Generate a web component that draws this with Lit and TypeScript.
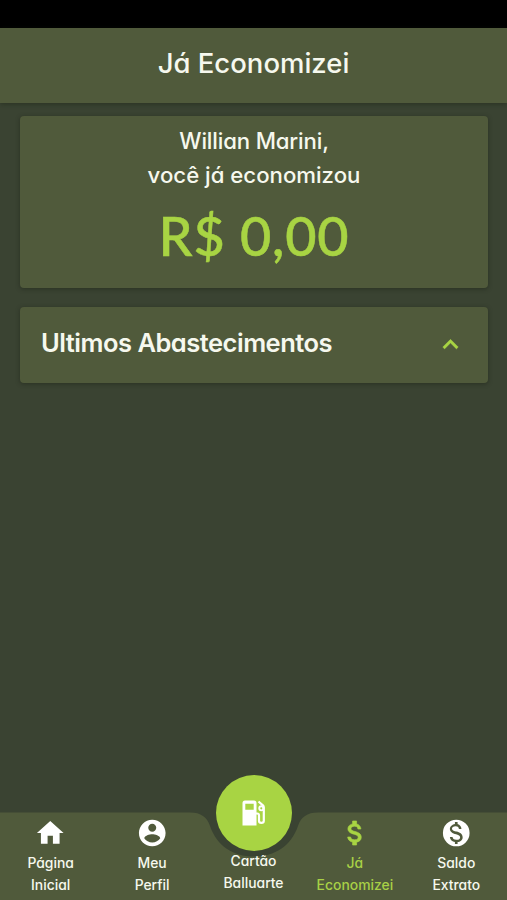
import { LitElement, html, css, svg } from "lit";
import { customElement } from "lit/decorators.js";
import { classMap } from "lit/directives/class-map.js";

const icons = {
  home: svg`<path d="M10 20v-6h4v6h5v-8h3L12 3 2 12h3v8z"/>`,
  person: svg`<path d="M12 2C6.48 2 2 6.48 2 12s4.48 10 10 10 10-4.48 10-10S17.52 2 12 2zm0 3c1.66 0 3 1.34 3 3s-1.34 3-3 3-3-1.34-3-3 1.34-3 3-3zm0 14.2c-2.5 0-4.71-1.28-6-3.22.03-1.99 4-3.08 6-3.08 1.99 0 5.97 1.09 6 3.08-1.29 1.94-3.5 3.22-6 3.22z"/>`,
  money: svg`<path stroke="currentColor" stroke-width=".5" d="M11.8 10.9c-2.27-.59-3-1.2-3-2.15 0-1.09 1.01-1.85 2.7-1.85 1.78 0 2.44.85 2.5 2.1h2.21c-.07-1.72-1.12-3.3-3.21-3.81V3h-3v2.16c-1.94.42-3.5 1.68-3.5 3.61 0 2.31 1.91 3.46 4.7 4.13 2.5.6 3 1.48 3 2.41 0 .69-.49 1.79-2.7 1.79-2.06 0-2.87-.92-2.98-2.1h-2.2c.12 2.19 1.76 3.42 3.68 3.83V21h3v-2.15c1.95-.37 3.5-1.5 3.5-3.55 0-2.84-2.43-3.81-4.7-4.4z"/>`,
  coin: svg`<path fill-rule="evenodd" d="M12 2a10 10 0 1 0 0 20a10 10 0 1 0 0-20zM11.8 10.9c-2.27-.59-3-1.2-3-2.15 0-1.09 1.01-1.85 2.7-1.85 1.78 0 2.44.85 2.5 2.1h1.9c-.07-1.72-1.12-3.1-2.9-3.7V3.8h-2v1.4c-1.94.42-3.8 1.64-3.8 3.57 0 2.31 1.91 3.46 4.7 4.13 2.5.6 3 1.48 3 2.41 0 .69-.49 1.79-2.7 1.79-2.06 0-2.87-.92-2.98-2.1h-2c.12 2.19 1.86 3.42 3.78 3.83v1.4h2v-1.4c1.95-.37 3.8-1.48 3.8-3.53 0-2.84-2.43-3.81-4.5-4.4z"/>`,
};

const items = [
  { icon: icons.home, lines: ["Página", "Inicial"] },
  { icon: icons.person, lines: ["Meu", "Perfil"] },
  { icon: null, lines: ["Cartão", "Balluarte"] },
  { icon: icons.money, lines: ["Já", "Economizei"], active: true },
  { icon: icons.coin, lines: ["Saldo", "Extrato"] },
];

@customElement("bottom-nav")
class BottomNav extends LitElement {
  static styles = css`
    :host { display: block; position: relative; height: 88px; }
    .bar { position: absolute; left: 0; top: 0; width: 507px; height: 88px; fill: #505a3b; }
    .items { position: relative; display: grid; grid-template-columns: repeat(5, 1fr); height: 88px; }
    .item { display: flex; flex-direction: column; align-items: center; min-width: 0; color: #f6f8ee; padding-top: 5px; }
    .active { color: #a8d046; }
    .icon { width: 32.500px; height: 32px; fill: currentColor; color: #fff; }
    .active .icon { color: #a8d443; }
    .label { margin-top: 4px; font-size: 13.900px; line-height: 21.500px; font-weight: 500; text-align: center; white-space: nowrap; }
    .center .label { margin-top: 34px; }
    .fab { position: absolute; left: 216px; top: -37px; width: 76px; height: 76px; border-radius: 50%;
      background: #a8d443; display: flex; align-items: center; justify-content: center; }
    .pump { width: 24px; height: 26px; fill: #fff; margin-bottom: 1px; }
    .hose { fill: none; stroke: #fff; stroke-width: 2.200; stroke-linejoin: round; }
  `;
  render() {
    return html`
      <svg class="bar" viewBox="0 0 507 88">
        <path d="M0 .5H190C201 .5 207 5 210 14C217 34 233 44.500 254 44.500S291 34 298 14C301 5 307 .5 318 .5H507V88H0z"/>
      </svg>
      <div class="items">
        ${items.map((i) => html`
          <div class=${classMap({ item: true, active: !!i.active, center: !i.icon })}>
            ${i.icon ? html`<svg class="icon" viewBox="0 0 24 24">${i.icon}</svg>` : ""}
            <div class="label">${i.lines[0]}<br />${i.lines[1]}</div>
          </div>`)}
      </div>
      <div class="fab">
        <svg class="pump" viewBox="0 0 24 26">
          <path fill-rule="evenodd" d="M3 .5h9a2.500 2.500 0 0 1 2.500 2.500v22.500h-14V3A2.500 2.500 0 0 1 3 .5zM3.300 3.800v6h8.400v-6z"/>
          <path class="hose" d="M14 13.500h1.200q1.800 0 1.800 1.800v5.400q0 2.200 2.400 2.200t2.400-2.200V7.500q0-1.300-.9-2.200L16.500 1.500"/>
          <path fill-rule="evenodd" d="M19.300 5.300a3 3 0 1 0 0 6a3 3 0 1 0 0-6zm0 1.900a1.100 1.100 0 1 1 0 2.200a1.100 1.100 0 1 1 0-2.200z"/>
        </svg>
      </div>`;
  }
}

@customElement("app-root")
class AppRoot extends LitElement {
  static styles = css`
    :host { display: flex; flex-direction: column; height: 900px; background: #3a4332; overflow: hidden;
      font-family: Inter, "Open Sans", sans-serif; font-feature-settings: "cv11"; color: #f6f8ee; }
    .status { height: 27.500px; background: #000; flex: none; }
    .header { height: 75.500px; flex: none; background: #505a3b; box-shadow: 0 1px 5px rgba(20, 28, 14, .45);
      display: flex; align-items: center; justify-content: center; font-size: 27.500px; font-weight: 450; padding-bottom: 5px; box-sizing: border-box; }
    .content { flex: 1; padding: 12.500px 19px 0 20px; display: flex; flex-direction: column; gap: 19px; }
    .card { background: #505a3b; border-radius: 4px; box-shadow: 0 1px 4px rgba(25, 32, 20, .5); box-sizing: border-box; }
    .summary { height: 172px; padding-top: 8px; text-align: center; font-size: 22.200px; font-weight: 450; line-height: 34px; }
    .name { letter-spacing: -.15px; }
    .amount { font-family: Lato, sans-serif; font-size: 54px; line-height: 76px; margin-top: 6px; letter-spacing: .8px;
      -webkit-text-stroke: .5px #a8d443; color: #a8d443; }
    .panel { height: 76.500px; display: flex; align-items: center; justify-content: space-between; padding: 0 22px 0 21px; }
    .title { font-size: 25.500px; font-weight: 600; letter-spacing: -.5px; line-height: 32px; padding-bottom: 4px; }
    .chevron { width: 31px; height: 31px; fill: #a8d443; stroke: #a8d443; stroke-width: .3; }
  `;
  render() {
    return html`
      <div class="status"></div>
      <div class="header"><span>Já Economizei</span></div>
      <div class="content">
        <div class="card summary">
          <div class="name">Willian Marini,</div>
          <div class="saved">você já economizou</div>
          <div class="amount">R$ 0,00</div>
        </div>
        <div class="card panel">
          <span class="title">Ultimos Abastecimentos</span>
          <svg class="chevron" viewBox="0 0 24 24"><path d="M12 8l-6 6 1.410 1.410L12 10.830l4.590 4.580L18 14z"/></svg>
        </div>
      </div>
      <bottom-nav></bottom-nav>`;
  }
}
